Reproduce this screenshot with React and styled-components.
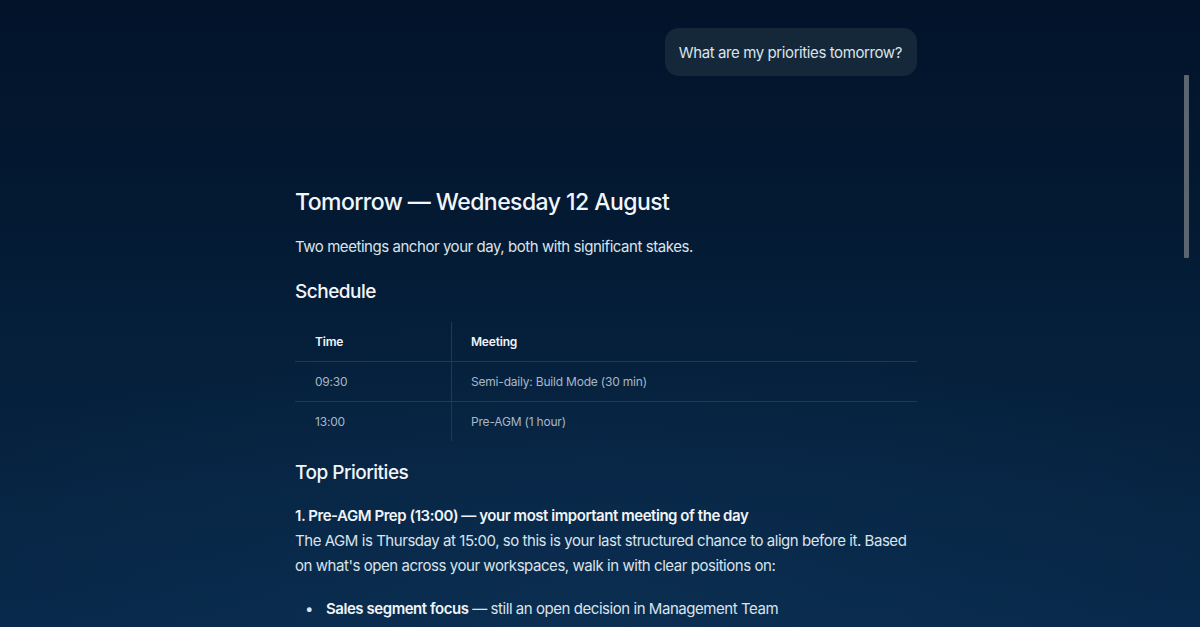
import React from "react";
import styled, { createGlobalStyle } from "styled-components";

const Global = createGlobalStyle`
  html, body { margin: 0; padding: 0; height: 100%; overflow: hidden; }
  body {
    font-family: Inter, "Noto Sans", "Liberation Sans", sans-serif;
    background: #03152b;
    -webkit-font-smoothing: antialiased;
  }
`;

const Page = styled.div`
  position: relative;
  height: 627px;
  overflow: hidden;
  background:
    radial-gradient(ellipse 90% 70% at 50% 100%, rgba(14, 52, 88, 0.5), rgba(14, 52, 88, 0) 70%),
    linear-gradient(180deg, #02132a 0%, #041a33 35%, #06223f 70%, #08284a 100%);
`;

const Column = styled.main`
  width: 622px;
  margin-left: 295px;
  padding-top: 28px;
  color: #dde5ee;
`;

const UserRow = styled.div`
  display: flex;
  justify-content: flex-end;
  margin-bottom: 110px;
`;

const Bubble = styled.div`
  background: #14283a;
  border-radius: 14px;
  padding: 0 15px 0 14px;
  height: 48px;
  display: flex;
  align-items: center;
  font-size: 15px;
  color: #dbe3eb;
  letter-spacing: -0.4px;
`;

const Title = styled.h1`
  margin: 0 0 16px;
  font-size: 23px;
  line-height: 32px;
  font-weight: 500;
  color: #f2f6fa;
  letter-spacing: -0.55px;
`;

const Para = styled.p`
  margin: 0 0 ${(p) => p.$mb || 0}px;
  font-size: 15px;
  line-height: 25px;
  color: #dbe3eb;
  letter-spacing: -0.45px;
`;

const SubTitle = styled.h2`
  margin: 0 0 ${(p) => p.$mb || 0}px;
  font-size: 19px;
  line-height: 28px;
  font-weight: 500;
  color: #f2f6fa;
  letter-spacing: -0.5px;
`;

const Table = styled.table`
  width: 100%;
  border-collapse: collapse;
  margin: 0 0 18px;
  font-size: 12px;
  letter-spacing: -0.2px;
`;

const Th = styled.th`
  text-align: left;
  font-weight: 600;
  color: #f0f4f8;
  height: 39px;
  padding: 0 19px 0 20px;
  border-bottom: 1px solid #1d3a56;
  ${(p) => p.$first && "width: 117px; border-right: 1px solid #1d3a56;"}
  ${(p) => !p.$first && "padding-left: 19px;"}
`;

const Td = styled.td`
  color: #a9b7c6;
  height: 39px;
  padding: 0 19px 0 ${(p) => (p.$first ? 20 : 19)}px;
  ${(p) => !p.$last && "border-bottom: 1px solid #1d3a56;"}
  ${(p) => p.$first && "border-right: 1px solid #1d3a56;"}
`;

const Strong = styled.strong`
  font-weight: 600;
  color: #f0f4f8;
`;

const List = styled.ul`
  margin: 0;
  padding: 0;
  list-style: none;
  font-size: 15px;
  line-height: 25px;
  color: #dbe3eb;
  letter-spacing: -0.45px;
`;

const Item = styled.li`
  display: flex;
  &::before {
    content: "•";
    flex: 0 0 auto;
    width: 21px;
    padding-left: 10px;
    color: #dbe3eb;
  }
`;

const ScrollThumb = styled.div`
  position: absolute;
  right: 11px;
  top: 75px;
  width: 5px;
  height: 183px;
  background: #5b6670;
  border-radius: 1px;
`;

export default function App() {
  const rows = [
    ["09:30", "Semi-daily: Build Mode (30 min)"],
    ["13:00", "Pre-AGM (1 hour)"],
  ];
  return (
    <>
      <Global />
      <Page>
        <Column>
          <UserRow>
            <Bubble>What are my priorities tomorrow?</Bubble>
          </UserRow>
          <Title>Tomorrow — Wednesday 12 August</Title>
          <Para $mb={19}>Two meetings anchor your day, both with significant stakes.</Para>
          <SubTitle $mb={16}>Schedule</SubTitle>
          <Table>
            <thead>
              <tr>
                <Th $first>Time</Th>
                <Th>Meeting</Th>
              </tr>
            </thead>
            <tbody>
              {rows.map((r, i) => (
                <tr key={r[0]}>
                  <Td $first $last={i === rows.length - 1}>{r[0]}</Td>
                  <Td $last={i === rows.length - 1}>{r[1]}</Td>
                </tr>
              ))}
            </tbody>
          </Table>
          <SubTitle $mb={16}>Top Priorities</SubTitle>
          <Para>
            <Strong>1. Pre-AGM Prep (13:00) — your most important meeting of the day</Strong>
          </Para>
          <Para $mb={18}>
            The AGM is Thursday at 15:00, so this is your last structured chance to align before it. Based on
            what's open across your workspaces, walk in with clear positions on:
          </Para>
          <List>
            <Item>
              <span>
                <Strong>Sales segment focus</Strong> — still an open decision in Management Team
              </span>
            </Item>
          </List>
        </Column>
        <ScrollThumb />
      </Page>
    </>
  );
}
